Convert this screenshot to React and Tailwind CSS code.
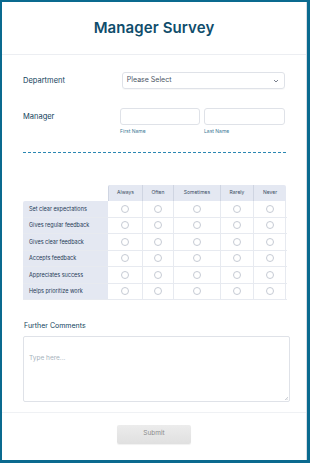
import React from 'react';

const cols = ['Always', 'Often', 'Sometimes', 'Rarely', 'Never'];
const widths = ['w-[35px]', 'w-[31px]', 'w-[47px]', 'w-[33px]', 'w-[32px]'];
const rows = [
  'Set clear expectations',
  'Gives regular feedback',
  'Gives clear feedback',
  'Accepts feedback',
  'Appreciates success',
  'Helps prioritize work',
];

export default function App() {
  return (
    <div className="w-[310px] h-[463px] bg-[#0a6a8f] pt-[2px] pl-[2px] pr-[3px] pb-[3px] font-['Inter',sans-serif]">
      <div className="h-full bg-white border-r border-[#d8dce3] flex flex-col">
        <div className="h-[53px] flex items-center justify-center border-b border-[#eceef2]">
          <h1 className="text-[15px] font-semibold text-[#0f4d6c] tracking-[0.1px]">Manager Survey</h1>
        </div>

        <div className="pl-[21px] pr-[21px] pt-[17px]">
          <div className="flex items-center">
            <span className="w-[100px] text-[7.5px] text-[#123f5c]">Department</span>
            <div className="w-[165px] h-[17px] border border-[#dfe2e8] rounded-[3px] flex items-center justify-between px-[4px] shadow-[0_1px_1px_rgba(0,0,0,0.03)]">
              <span className="text-[7px] text-[#4a5565]">Please Select</span>
              <svg width="6" height="4" viewBox="0 0 6 4" className="mr-[1px]">
                <path d="M1 1l2 2 2-2" fill="none" stroke="#6b7280" strokeWidth="0.9" />
              </svg>
            </div>
          </div>

          <div className="flex mt-[19px]">
            <span className="w-[100px] text-[7.5px] text-[#123f5c] pt-[3px]">Manager</span>
            <div className="flex gap-[4px]">
              <div className="flex flex-col">
                <div className="w-[80px] h-[17px] border border-[#dfe2e8] rounded-[3px]" />
                <span className="text-[5px] text-[#3d7a97] mt-[3px]">First Name</span>
              </div>
              <div className="flex flex-col">
                <div className="w-[81px] h-[17px] border border-[#dfe2e8] rounded-[3px]" />
                <span className="text-[5px] text-[#3d7a97] mt-[3px]">Last Name</span>
              </div>
            </div>
          </div>

          <div className="mt-[16px] w-[264px] h-[1.5px] bg-[repeating-linear-gradient(90deg,#2a87b2_0px,#2a87b2_3px,transparent_3px,transparent_5px)]" />

          <div className="mt-[32px] w-[264px]">
            <div className="flex pl-[85px]">
              {cols.map((c, i) => (
                <div
                  key={c}
                  className={`${widths[i]} h-[16px] bg-[#e4e8f2] flex items-center justify-center text-[5px] text-[#3b4d63] border-r border-[#cfd5e2] last:border-r-0 ${i === 0 ? 'border-l rounded-tl-[2px]' : ''} ${i === 4 ? 'rounded-tr-[2px]' : ''}`}
                >
                  {c}
                </div>
              ))}
            </div>
            {rows.map((r, ri) => (
              <div key={r} className="flex h-[16.5px] border-b border-[#e7eaf0]">
                <div className={`w-[85px] bg-[#e4e8f2] flex items-center pl-[6px] text-[5.5px] text-[#1f3b57] ${ri === 0 ? 'rounded-tl-[2px]' : ''}`}>{r}</div>
                {cols.map((c, i) => (
                  <div key={c} className={`${widths[i]} flex items-center justify-center border-r border-[#e7eaf0]`}>
                    <div className="w-[8px] h-[8px] rounded-full border border-[#c6cbd4]" />
                  </div>
                ))}
              </div>
            ))}
          </div>

          <div className="mt-[21px] pl-[1px] text-[7px] text-[#123f5c]">Further Comments</div>
          <div className="mt-[4px] w-[267px] h-[66px] border border-[#dfe2e8] rounded-[2px] relative px-[5px] py-[5px]">
            <span className="text-[6.5px] text-[#a6b2bc]">Type here...</span>
            <svg width="4" height="4" viewBox="0 0 4 4" className="absolute right-[1px] bottom-[1px]">
              <path d="M4 1L1 4M4 2.5L2.5 4" stroke="#9ca3af" strokeWidth="0.5" />
            </svg>
          </div>
        </div>

        <div className="mt-[10px] border-t border-[#eff1f4] flex justify-center pt-[12px]">
          <div className="w-[74px] h-[19px] rounded-[2px] bg-gradient-to-b from-[#ececec] to-[#e0e0e0] flex items-center justify-center text-[6.5px] text-[#8a8a8a] shadow-[0_1px_1px_rgba(0,0,0,0.06)]">
            Submit
          </div>
        </div>
      </div>
    </div>
  );
}
